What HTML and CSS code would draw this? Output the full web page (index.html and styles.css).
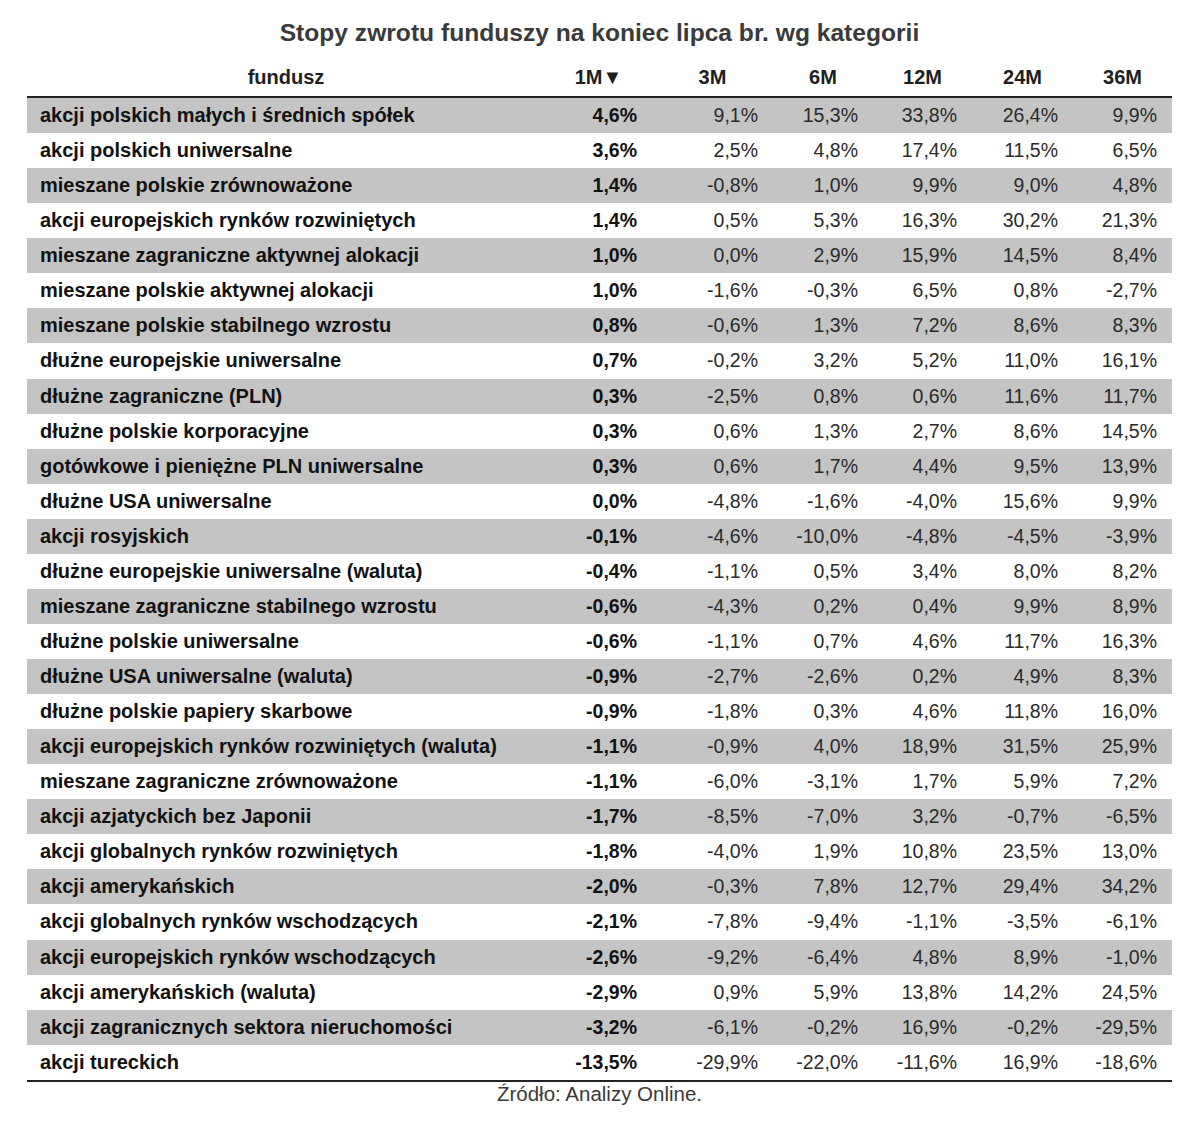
FILE: index.html
```html
<!DOCTYPE html>
<html lang="pl">
<head>
<meta charset="utf-8">
<title>Stopy zwrotu funduszy</title>
<link rel="stylesheet" href="styles.css">
</head>
<body>
<div class="page">
  <h1 class="title">Stopy zwrotu funduszy na koniec lipca br. wg kategorii</h1>
  <table class="returns">
    <colgroup>
      <col class="c-name"><col class="c-1m"><col class="c-3m"><col class="c-6m"><col class="c-12m"><col class="c-24m"><col class="c-36m">
    </colgroup>
    <thead>
      <tr><th>fundusz</th><th>1M▼</th><th>3M</th><th>6M</th><th>12M</th><th>24M</th><th>36M</th></tr>
    </thead>
    <tbody>
      <tr><td>akcji polskich małych i średnich spółek</td><td>4,6%</td><td>9,1%</td><td>15,3%</td><td>33,8%</td><td>26,4%</td><td>9,9%</td></tr>
      <tr><td>akcji polskich uniwersalne</td><td>3,6%</td><td>2,5%</td><td>4,8%</td><td>17,4%</td><td>11,5%</td><td>6,5%</td></tr>
      <tr><td>mieszane polskie zrównoważone</td><td>1,4%</td><td>-0,8%</td><td>1,0%</td><td>9,9%</td><td>9,0%</td><td>4,8%</td></tr>
      <tr><td>akcji europejskich rynków rozwiniętych</td><td>1,4%</td><td>0,5%</td><td>5,3%</td><td>16,3%</td><td>30,2%</td><td>21,3%</td></tr>
      <tr><td>mieszane zagraniczne aktywnej alokacji</td><td>1,0%</td><td>0,0%</td><td>2,9%</td><td>15,9%</td><td>14,5%</td><td>8,4%</td></tr>
      <tr><td>mieszane polskie aktywnej alokacji</td><td>1,0%</td><td>-1,6%</td><td>-0,3%</td><td>6,5%</td><td>0,8%</td><td>-2,7%</td></tr>
      <tr><td>mieszane polskie stabilnego wzrostu</td><td>0,8%</td><td>-0,6%</td><td>1,3%</td><td>7,2%</td><td>8,6%</td><td>8,3%</td></tr>
      <tr><td>dłużne europejskie uniwersalne</td><td>0,7%</td><td>-0,2%</td><td>3,2%</td><td>5,2%</td><td>11,0%</td><td>16,1%</td></tr>
      <tr><td>dłużne zagraniczne (PLN)</td><td>0,3%</td><td>-2,5%</td><td>0,8%</td><td>0,6%</td><td>11,6%</td><td>11,7%</td></tr>
      <tr><td>dłużne polskie korporacyjne</td><td>0,3%</td><td>0,6%</td><td>1,3%</td><td>2,7%</td><td>8,6%</td><td>14,5%</td></tr>
      <tr><td>gotówkowe i pieniężne PLN uniwersalne</td><td>0,3%</td><td>0,6%</td><td>1,7%</td><td>4,4%</td><td>9,5%</td><td>13,9%</td></tr>
      <tr><td>dłużne USA uniwersalne</td><td>0,0%</td><td>-4,8%</td><td>-1,6%</td><td>-4,0%</td><td>15,6%</td><td>9,9%</td></tr>
      <tr><td>akcji rosyjskich</td><td>-0,1%</td><td>-4,6%</td><td>-10,0%</td><td>-4,8%</td><td>-4,5%</td><td>-3,9%</td></tr>
      <tr><td>dłużne europejskie uniwersalne (waluta)</td><td>-0,4%</td><td>-1,1%</td><td>0,5%</td><td>3,4%</td><td>8,0%</td><td>8,2%</td></tr>
      <tr><td>mieszane zagraniczne stabilnego wzrostu</td><td>-0,6%</td><td>-4,3%</td><td>0,2%</td><td>0,4%</td><td>9,9%</td><td>8,9%</td></tr>
      <tr><td>dłużne polskie uniwersalne</td><td>-0,6%</td><td>-1,1%</td><td>0,7%</td><td>4,6%</td><td>11,7%</td><td>16,3%</td></tr>
      <tr><td>dłużne USA uniwersalne (waluta)</td><td>-0,9%</td><td>-2,7%</td><td>-2,6%</td><td>0,2%</td><td>4,9%</td><td>8,3%</td></tr>
      <tr><td>dłużne polskie papiery skarbowe</td><td>-0,9%</td><td>-1,8%</td><td>0,3%</td><td>4,6%</td><td>11,8%</td><td>16,0%</td></tr>
      <tr><td>akcji europejskich rynków rozwiniętych (waluta)</td><td>-1,1%</td><td>-0,9%</td><td>4,0%</td><td>18,9%</td><td>31,5%</td><td>25,9%</td></tr>
      <tr><td>mieszane zagraniczne zrównoważone</td><td>-1,1%</td><td>-6,0%</td><td>-3,1%</td><td>1,7%</td><td>5,9%</td><td>7,2%</td></tr>
      <tr><td>akcji azjatyckich bez Japonii</td><td>-1,7%</td><td>-8,5%</td><td>-7,0%</td><td>3,2%</td><td>-0,7%</td><td>-6,5%</td></tr>
      <tr><td>akcji globalnych rynków rozwiniętych</td><td>-1,8%</td><td>-4,0%</td><td>1,9%</td><td>10,8%</td><td>23,5%</td><td>13,0%</td></tr>
      <tr><td>akcji amerykańskich</td><td>-2,0%</td><td>-0,3%</td><td>7,8%</td><td>12,7%</td><td>29,4%</td><td>34,2%</td></tr>
      <tr><td>akcji globalnych rynków wschodzących</td><td>-2,1%</td><td>-7,8%</td><td>-9,4%</td><td>-1,1%</td><td>-3,5%</td><td>-6,1%</td></tr>
      <tr><td>akcji europejskich rynków wschodzących</td><td>-2,6%</td><td>-9,2%</td><td>-6,4%</td><td>4,8%</td><td>8,9%</td><td>-1,0%</td></tr>
      <tr><td>akcji amerykańskich (waluta)</td><td>-2,9%</td><td>0,9%</td><td>5,9%</td><td>13,8%</td><td>14,2%</td><td>24,5%</td></tr>
      <tr><td>akcji zagranicznych sektora nieruchomości</td><td>-3,2%</td><td>-6,1%</td><td>-0,2%</td><td>16,9%</td><td>-0,2%</td><td>-29,5%</td></tr>
      <tr><td>akcji tureckich</td><td>-13,5%</td><td>-29,9%</td><td>-22,0%</td><td>-11,6%</td><td>16,9%</td><td>-18,6%</td></tr>
    </tbody>
  </table>
  <p class="source">Źródło: Analizy Online.</p>
</div>
</body>
</html>
```
FILE: styles.css
```css
html, body {
  margin: 0;
  padding: 0;
  background: #ffffff;
}
.page {
  width: 1145px;
  margin-left: 27px;
  font-family: "Liberation Sans", Arial, sans-serif;
  color: #161616;
}
.title {
  margin: 0;
  height: 58px;
  line-height: 66px;
  font-size: 24.6px;
  font-weight: bold;
  color: #3a3a3a;
  text-align: center;
}
.returns {
  width: 1145px;
  border-collapse: collapse;
  table-layout: fixed;
}
.c-name { width: 518px; }
.c-1m { width: 107px; }
.c-3m { width: 121px; }
.c-6m { width: 100px; }
.c-12m { width: 99px; }
.c-24m { width: 101px; }
.c-36m { width: 99px; }
.returns th {
  height: 38px;
  padding: 0;
  font-size: 20px;
  font-weight: bold;
  color: #1e1e1e;
  text-align: center;
  border-bottom: 2px solid #222;
}
.returns td {
  height: 35.07px;
  padding: 0 15px 0 0;
  font-size: 19.5px;
  text-align: right;
  color: #2a2a2a;
  white-space: nowrap;
}
.returns td:first-child {
  padding: 0 0 0 13px;
  text-align: left;
  font-size: 20px;
  font-weight: bold;
  color: #121212;
}
.returns td:nth-child(2) {
  font-weight: bold;
  color: #121212;
}
.returns tbody tr:nth-child(odd) td {
  background: #c4c4c4;
}
.returns tbody tr:last-child td {
  border-bottom: 2px solid #222;
}
.source {
  margin: 0;
  font-size: 20.5px;
  color: #3a3a3a;
  text-align: center;
  line-height: 24px;
}
```
